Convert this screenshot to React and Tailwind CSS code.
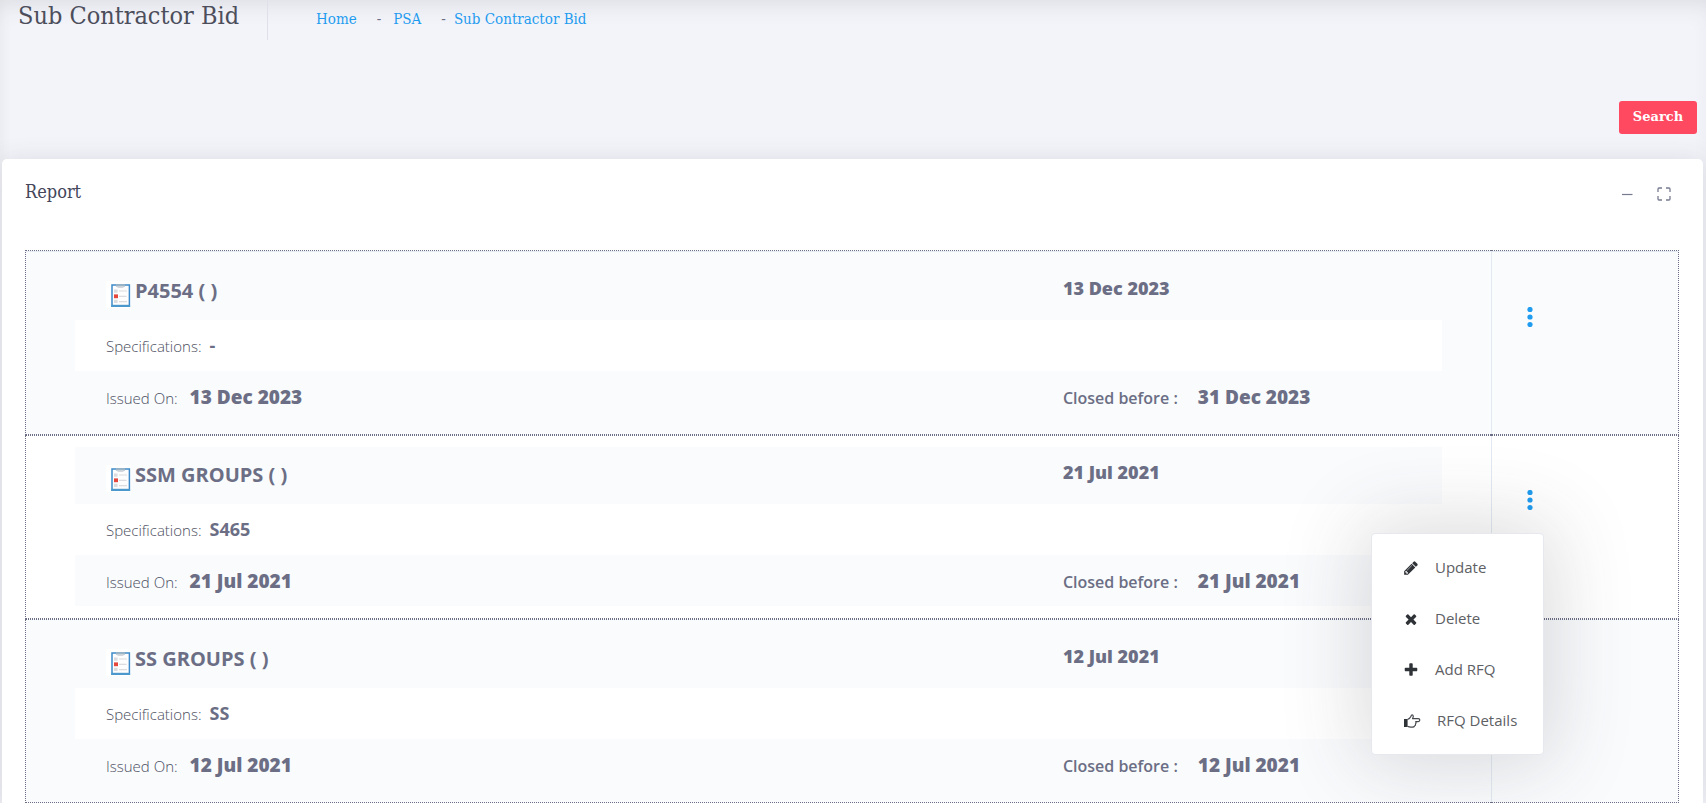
const bids = [
  { name: "P4554 ( )", date: "13 Dec 2023", spec: "-", issued: "13 Dec 2023", closed: "31 Dec 2023" },
  { name: "SSM GROUPS ( )", date: "21 Jul 2021", spec: "S465", issued: "21 Jul 2021", closed: "21 Jul 2021" },
  { name: "SS GROUPS ( )", date: "12 Jul 2021", spec: "SS", issued: "12 Jul 2021", closed: "12 Jul 2021" },
];

const glyphs = {
  pencil:
    "M491 1536l91-91-235-235-91 91v107h128v128h107zm523-928q0-22-22-22-10 0-17 7l-542 542q-7 7-7 17 0 22 22 22 10 0 17-7l542-542q7-7 7-17zm-54-192l416 416-832 832h-416v-416zm683 96q0 53-37 90l-166 166-416-416 166-165q36-38 90-38 53 0 91 38l235 234q37 39 37 91z",
  times:
    "M1490 1322q0 40-28 68l-136 136q-28 28-68 28t-68-28l-294-294-294 294q-28 28-68 28t-68-28l-136-136q-28-28-28-68t28-68l294-294-294-294q-28-28-28-68t28-68l136-136q28-28 68-28t68 28l294 294 294-294q28-28 68-28t68 28l136 136q28 28 28 68t-28 68l-294 294 294 294q28 28 28 68z",
  plus:
    "M1600 736v192q0 40-28 68t-68 28h-416v416q0 40-28 68t-68 28h-192q-40 0-68-28t-28-68v-416h-416q-40 0-68-28t-28-68v-192q0-40 28-68t68-28h416v-416q0-40 28-68t68-28h192q40 0 68 28t28 68v416h416q40 0 68 28t28 68z",
};

function Glyph({ name }) {
  return (
    <svg viewBox="0 0 1792 1792" className="size-4 fill-[#2f3237]" aria-hidden="true">
      <path d={glyphs[name]} />
    </svg>
  );
}

function HandIcon() {
  return (
    <svg viewBox="0 0 18 16" className="h-4 w-[18px]" fill="none" aria-hidden="true">
      <path d="M1 6h3.6v8H1z" fill="#2f3237" />
      <path
        d="M4.5 6.5Q7 5.4 8 3.2Q8.6 1.4 9.9 2.2Q10.9 3.2 9.6 5.6H15.2Q16.8 5.7 16.8 7.1Q16.8 8.6 15.2 8.6H12.7Q13.6 10 12.5 11Q12.9 12.5 11.5 13Q11.1 14.2 9.5 14.2H8Q6 14.1 4.5 13.3"
        stroke="#44474c"
        strokeWidth="1.2"
        strokeLinejoin="round"
      />
    </svg>
  );
}

function ClipboardIcon() {
  return (
    <svg viewBox="0 0 25 27" className="h-[27px] w-[25px] shrink-0" aria-hidden="true">
      <rect width="25" height="27" fill="#fff" />
      <rect x="6" y="4" width="17.4" height="21.2" fill="#fdfdfd" stroke="#3c8ac9" strokeWidth="1.5" />
      <rect x="5.3" y="23.8" width="18.8" height="2.2" fill="#4b98cc" />
      <rect x="10" y="3.2" width="9" height="2.4" fill="#9db4c6" />
      <rect x="11.5" y="5.6" width="6" height="1.4" fill="#d4d8dc" />
      <rect x="8" y="8.5" width="3.6" height="3.2" fill="#dcdcdf" />
      <rect x="8" y="13.4" width="4" height="3.8" fill="#e5473d" />
      <rect x="8" y="18.8" width="3.6" height="3.2" fill="#dcdcdf" />
      <path d="M13 10h8M13 15.4h7.5M13 20.6h8" stroke="#dcdce0" strokeWidth="1.2" />
    </svg>
  );
}

function DotsIcon() {
  return (
    <svg viewBox="0 0 6 20" className="h-5 w-[6px] fill-[#1f9cf0]" aria-hidden="true">
      <circle cx="3" cy="2.5" r="2.6" />
      <circle cx="3" cy="10" r="2.6" />
      <circle cx="3" cy="17.5" r="2.6" />
    </svg>
  );
}

function ActionMenu() {
  const item = "flex h-[51px] w-full items-center gap-4 pl-[31px] text-left hover:bg-gray-50";
  return (
    <div
      role="menu"
      className="absolute right-[134px] top-[97px] z-10 w-[173px] rounded-[4px] border border-[#e6e8ee] bg-white py-[8px] text-[15px] text-[#5d6064] shadow-[0_0_80px_10px_rgba(60,62,64,0.18)]"
    >
      <button role="menuitem" className={item}><Glyph name="pencil" />Update</button>
      <button role="menuitem" className={item}><Glyph name="times" />Delete</button>
      <button role="menuitem" className={item}><Glyph name="plus" />Add RFQ</button>
      <button role="menuitem" className={item}><HandIcon />RFQ Details</button>
    </div>
  );
}

function BidDetails({ bid }) {
  return (
    <table className="w-full table-fixed border-collapse text-left">
      <colgroup>
        <col className="w-[70%]" />
        <col />
      </colgroup>
      <tbody>
        <tr className="h-[57px] bg-[#f9fbfd]">
          <td className="p-0 pl-[31px]">
            <div className="flex items-center gap-1 pt-[6px] text-[20px] font-bold">
              <ClipboardIcon />
              <span className="pb-[7px] leading-5">{bid.name}</span>
            </div>
          </td>
          <td className="p-0 pb-2 pl-[31px] text-[18px] font-extrabold leading-6">{bid.date}</td>
        </tr>
        <tr className="h-[51px] bg-white">
          <td className="p-0 pl-[31px]" colSpan={2}>
            <div className="flex items-baseline gap-2">
              <span className="text-[15px] font-light text-[#4b4e60]">Specifications:</span>
              <span className="text-[18px] font-bold">{bid.spec}</span>
            </div>
          </td>
        </tr>
        <tr className="h-[51px] bg-[#f9fbfd]">
          <td className="p-0 pl-[31px] pt-[2px]">
            <div className="flex items-baseline gap-3">
              <span className="text-[15px] font-light text-[#4b4e60]">Issued On:</span>
              <span className="text-[19px] font-extrabold">{bid.issued}</span>
            </div>
          </td>
          <td className="p-0 pl-[31px] pt-[2px]">
            <div className="flex items-baseline gap-5 whitespace-nowrap">
              <span className="text-[16px] font-semibold">Closed before :</span>
              <span className="text-[19px] font-extrabold">{bid.closed}</span>
            </div>
          </td>
        </tr>
      </tbody>
    </table>
  );
}

export default function App() {
  const link = "text-[#1f9cf0] hover:underline";
  return (
    <div className="min-h-screen bg-[#f3f4f9] font-['Open_Sans','Noto_Sans',sans-serif] text-[#6b6e84] shadow-[inset_0_14px_24px_-12px_rgba(60,62,70,0.14),inset_12px_0_16px_-12px_rgba(60,62,70,0.03)]">
      <header className="flex h-10 items-center font-['DejaVu_Serif_Condensed','DejaVu_Serif',serif]">
        <h1 className="flex h-10 w-[268px] items-center whitespace-nowrap border-r border-[#e0e1e8] pb-2 pl-[18px] text-[25px] text-[#4c4e5c]">
          Sub Contractor Bid
        </h1>
        <nav aria-label="Breadcrumb" className="flex items-center pb-[2px] pl-12 text-[15px]">
          <a href="#home" className={link}>Home</a>
          <span className="pl-5 pr-3">-</span>
          <a href="#psa" className={link}>PSA</a>
          <span className="pl-5 pr-2">-</span>
          <a href="#bid" className={link}>Sub Contractor Bid</a>
        </nav>
      </header>

      <div className="flex justify-end pb-[25px] pr-[9px] pt-[61px]">
        <button className="h-[33px] w-[78px] rounded-[3px] bg-[#ff4961] pb-[2px] font-['DejaVu_Serif',serif] text-[13px] font-bold text-white">
          Search
        </button>
      </div>

      <section className="ml-[2px] mr-[3px] rounded-t-[5px] bg-white pl-[23px] pr-6 shadow-[0_0_24px_0_rgba(60,62,75,0.12)]">
        <div className="flex h-[91px] items-start justify-between pr-2">
          <h2 className="pt-[19px] font-['DejaVu_Serif_Condensed','DejaVu_Serif',serif] text-[18px] text-[#44465a]">Report</h2>
          <div className="flex gap-6 pt-7">
            <button aria-label="Collapse">
              <svg viewBox="0 0 14 14" className="size-[14px] stroke-[#777b90]" fill="none" aria-hidden="true">
                <path d="M3 7.5h10.5" strokeWidth="1.2" />
              </svg>
            </button>
            <button aria-label="Fullscreen">
              <svg viewBox="0 0 14 14" className="size-[14px] stroke-[#777b90]" fill="none" aria-hidden="true">
                <path d="M1 5V2q0-1 1-1h3M9 1h3q1 0 1 1v3M13 9v3q0 1-1 1H9M5 13H2q-1 0-1-1V9" strokeWidth="1.3" />
              </svg>
            </button>
          </div>
        </div>

        <table className="w-full border-separate border-spacing-0">
          <tbody>
            {bids.map((bid, i) => (
              <tr key={bid.name} className="odd:bg-[#f9fbfd]">
                <td className="border-y border-l border-dotted border-[#6b6e84] p-0 align-top">
                  <div className={i === 0 ? "border-t border-solid border-[#e8edf4] px-[49px] py-[11px]" : "px-[49px] py-[11px]"}>
                    <BidDetails bid={bid} />
                  </div>
                </td>
                <td className="relative w-[188px] border-y border-r border-dotted border-[#6b6e84] p-0 align-top">
                  <div className={i === 0 ? "h-[183px] border-l border-t border-[#e3e9f1] pl-[35px] pt-[55px]" : "h-[182px] border-l border-[#e3e9f1] pl-[35px] pt-[54px]"}>
                    <button aria-label={"Actions for " + bid.name} className="block">
                      <DotsIcon />
                    </button>
                  </div>
                  {i === 1 && <ActionMenu />}
                </td>
              </tr>
            ))}
          </tbody>
        </table>
      </section>
    </div>
  );
}
